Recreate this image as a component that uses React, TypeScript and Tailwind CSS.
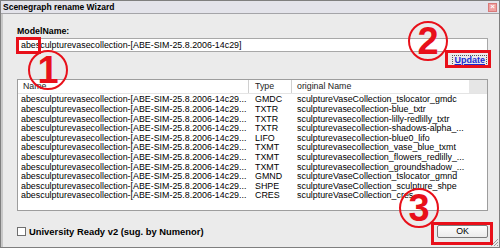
import React from 'react';

const name = 'abesculpturevasecollection-[ABE-SIM-25.8.2006-14c29...';

const rows: [string, string][] = [
  ['GMDC', 'sculptureVaseCollection_tslocator_gmdc'],
  ['TXTR', 'sculpturevasecollection-blue_txtr'],
  ['TXTR', 'sculpturevasecollection-lilly-redlilly_txtr'],
  ['TXTR', 'sculpturevasecollection-shadows-alpha_...'],
  ['LIFO', 'sculpturevasecollection-blue0_lifo'],
  ['TXMT', 'sculpturevasecollection_vase_blue_txmt'],
  ['TXMT', 'sculpturevasecollection_flowers_redlilly_...'],
  ['TXMT', 'sculpturevasecollection_groundshadow_...'],
  ['GMND', 'sculptureVaseCollection_tslocator_gmnd'],
  ['SHPE', 'sculptureVaseCollection_sculpture_shpe'],
  ['CRES', 'sculptureVaseCollection_cres'],
];

function Marker({ n, className }: { n: string; className: string }) {
  return (
    <div
      className={`absolute w-[40px] h-[40px] rounded-full border-2 border-[#e8101a] flex items-center justify-center text-[38px] leading-none font-bold text-[#e8101a] ${className}`}
    >
      {n}
    </div>
  );
}

export default function App() {
  return (
    <div className="relative w-[500px] h-[248px] overflow-hidden bg-[#ebebeb] border border-[#7f7f7f] font-['Liberation_Sans',Arial,sans-serif] text-black">
      {/* title bar */}
      <div className="h-[13px] flex items-center justify-between pl-[2px] pr-[2px] bg-[#e3e3ea] border-b border-[#a4a4a8]">
        <span className="text-[8.5px] font-bold leading-none">Scenegraph rename Wizard</span>
        <span className="w-[9px] h-[9px] bg-[#f0a0a0] border border-[#d87a7a] flex items-center justify-center text-white text-[8px] leading-none font-bold">
          ×
        </span>
      </div>

      <div className="flex flex-col pl-[14px] pr-[11px] pt-[13px] h-[233px] border-l-2 border-[#c8c8c8]">
        <div className="text-[8.8px] font-bold leading-none h-[10px]">ModelName:</div>
        <div className="mt-[1px] h-[14px] bg-white border border-[#a8a8a8] flex items-center pl-[3px] text-[8.9px] leading-none">
          abesculpturevasecollection-[ABE-SIM-25.8.2006-14c29]
        </div>
        <div className="flex justify-end h-[14px] items-center pr-[1px] mt-[1px]">
          <span className="text-[9px] font-bold text-[#1a2ad0] underline leading-none border border-dotted border-[#555] px-[1px]">
            Update
          </span>
        </div>
        <div className="mt-[12px] h-[132px] bg-white border border-[#9d9d9d] flex flex-col">
          <div className="h-[14px] flex text-[8.8px] leading-none text-[#222] border-b border-[#e4e4e4]">
            <div className="w-[231px] flex items-center pl-[5px] border-r border-[#d0d0d0]">Name</div>
            <div className="w-[43px] flex items-center pl-[6px] border-r border-[#d0d0d0]">Type</div>
            <div className="w-[177px] flex items-center pl-[5px]">original Name</div>
            <div className="flex-1 bg-[#e6e6e6]" />
          </div>
          <div className="pt-[1px] flex flex-col text-[8.9px] leading-none">
            {rows.map(([t, o], i) => (
              <div key={i} className="h-[9.6px] flex items-center whitespace-nowrap">
                <div className="w-[231px] pl-[3px] overflow-hidden">{name}</div>
                <div className="w-[43px] pl-[6px]">{t}</div>
                <div className="pl-[5px]">{o}</div>
              </div>
            ))}
          </div>
        </div>
        <div className="flex items-center justify-between mt-[14px]">
          <div className="flex items-center gap-[3px]">
            <span className="w-[9px] h-[9px] bg-white border border-[#6f6f6f]" />
            <span className="text-[9.4px] font-bold leading-none">University Ready v2 (sug. by Numenor)</span>
          </div>
          <div className="w-[51px] h-[13px] bg-gradient-to-b from-[#fdfdfd] to-[#ececec] border border-[#7b7b7b] rounded-[2px] flex items-center justify-center text-[8.8px] leading-none">
            OK
          </div>
        </div>
      </div>

      {/* resize grip */}
      <svg className="absolute right-0 bottom-0" width="10" height="10" viewBox="0 0 10 10">
        <path d="M9 2 L2 9 M9 5 L5 9 M9 8 L8 9" stroke="#9a9a9a" strokeWidth="1" />
      </svg>

      {/* annotations */}
      <div className="absolute left-[15px] top-[36px] w-[25px] h-[17px] border-[3px] border-[#e8101a]" />
      <div className="absolute left-[444px] top-[49px] w-[46px] h-[18px] border-[3px] border-[#e8101a]" />
      <div className="absolute left-[430px] top-[221px] w-[62px] h-[23px] border-[3px] border-[#e8101a]" />
      <Marker n="1" className="left-[27px] top-[49px]" />
      <Marker n="2" className="left-[407px] top-[20px]" />
      <Marker n="3" className="left-[398px] top-[187px]" />
    </div>
  );
}
